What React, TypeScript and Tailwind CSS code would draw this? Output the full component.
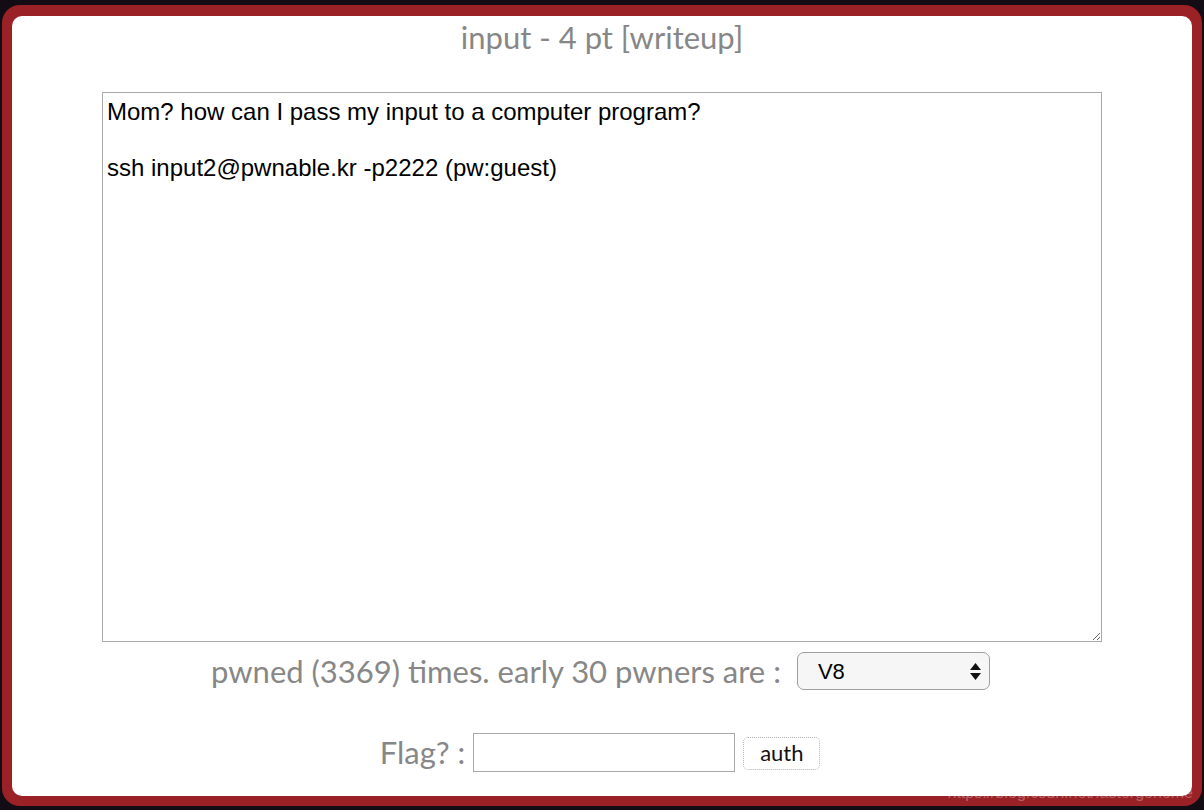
import React from "react";

const lato = { fontFamily: "Lato, 'Noto Sans', sans-serif" };

const SelectBox = () => (
  <div className="relative ml-[16px] flex h-[38px] w-[193px] items-center rounded-[7px] border border-[#9e9e9e] bg-[#f6f6f6] pl-[20px] text-[22px] text-black [font-family:'Liberation_Sans',Arial,sans-serif]">
    V8
    <svg
      className="absolute right-[7px] top-[9px]"
      width="13"
      height="19"
      viewBox="0 0 13 19"
    >
      <path d="M6.5 1 L12 8 L1 8 Z" fill="#111" />
      <path d="M1 11 L12 11 L6.5 18 Z" fill="#111" />
    </svg>
  </div>
);

export default function App() {
  return (
    <div className="relative h-[810px] w-[1204px] overflow-hidden bg-[#130c15] pl-[2px] pt-[5px]">
      <div className="h-[801px] w-[1200px] rounded-[18px] bg-[#9a2227] px-[10px] pb-[10px] pt-[11px]">
        <div className="flex h-full flex-col items-center rounded-[10px] bg-white" style={lato}>
          <h1 className="mt-[3px] text-[31px] leading-[37px] text-[#878787]">
            input - 4 pt [writeup]
          </h1>

          <textarea
            readOnly
            className="mt-[36px] h-[550px] w-[1000px] resize border border-[#a9a9a9] px-[4px] pt-[5px] text-[24px] leading-[28px] text-black outline-none [font-family:'Liberation_Sans',Arial,sans-serif]"
            defaultValue={
              "Mom? how can I pass my input to a computer program?\n\nssh input2@pwnable.kr -p2222 (pw:guest)"
            }
          />

          <div className="mt-[10px] flex items-center pr-[3px]">
            <span className="text-[31px] leading-[37px] text-[#878787]">
              pwned (3369) times. early 30 pwners are :
            </span>
            <SelectBox />
          </div>

          <div className="mt-[43px] flex items-center pr-[4px]">
            <span className="text-[31px] leading-[37px] text-[#878787]">
              Flag? :
            </span>
            <input
              type="text"
              className="ml-[8px] h-[39px] w-[262px] border border-[#a9a9a9] px-[4px] text-[20px] outline-none"
            />
            <button className="ml-[8px] mt-[1px] h-[33px] w-[77px] rounded-[5px] border border-dotted border-[#b5b5b5] bg-white text-[22px] leading-none text-[#111]">
              auth
            </button>
          </div>
        </div>
      </div>
      <div className="absolute bottom-[9px] right-[11px] text-[16px] leading-none text-white/30 [font-family:'Liberation_Sans',Arial,sans-serif]">
        https://blog.csdn.net/fastergohome
      </div>
    </div>
  );
}
